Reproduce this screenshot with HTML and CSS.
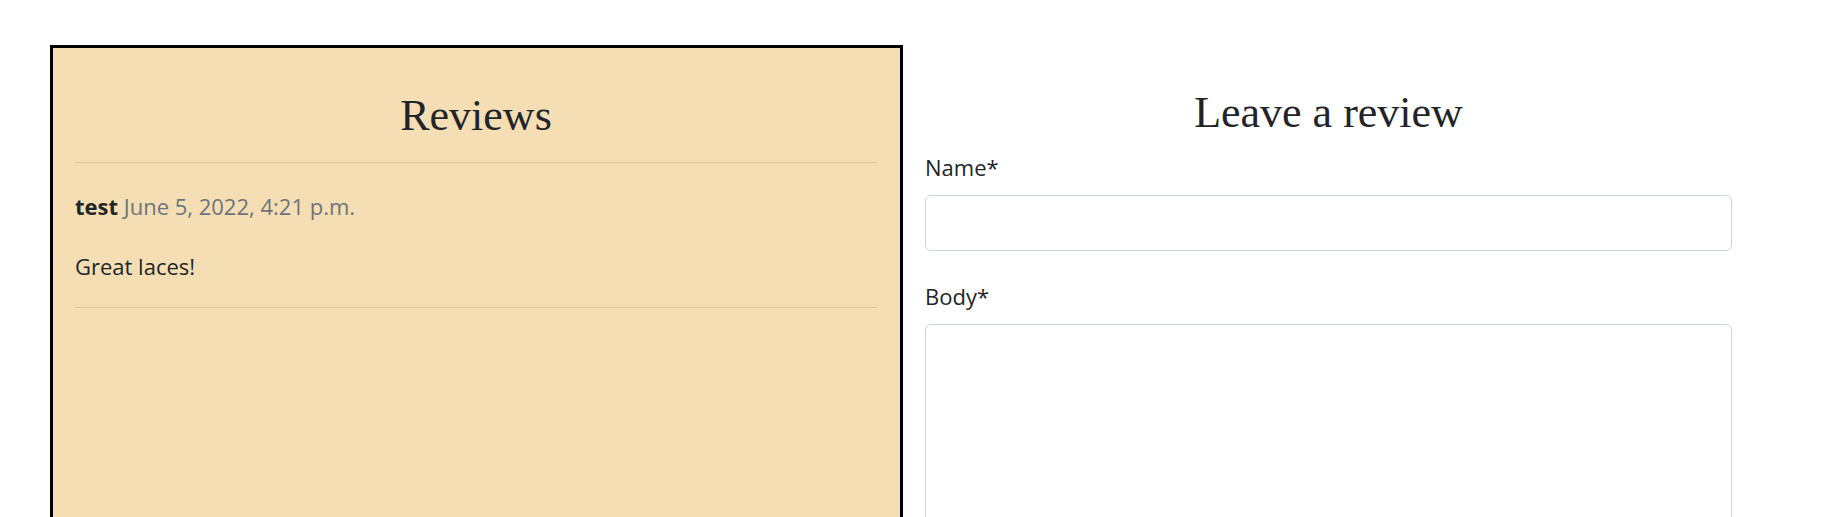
FILE: index.html
```html
<!DOCTYPE html>
<html lang="en">
<head>
<meta charset="utf-8">
<title>Reviews</title>
<link rel="stylesheet" href="styles.css">
</head>
<body>
<div class="page">
  <section class="reviews">
    <h2 class="title">Reviews</h2>
    <hr class="rule">
    <div class="review">
      <p class="meta"><strong class="author">test</strong> <span class="date">June 5, 2022, 4:21 p.m.</span></p>
      <p class="body">Great laces!</p>
    </div>
    <hr class="rule rule-end">
  </section>
  <section class="form-col">
    <h2 class="title form-title">Leave a review</h2>
    <form class="form">
      <div class="field">
        <label class="label" for="name">Name*</label>
        <input class="input" id="name" type="text">
      </div>
      <div class="field field-body">
        <label class="label" for="body">Body*</label>
        <textarea class="input textarea" id="body"></textarea>
      </div>
    </form>
  </section>
</div>
</body>
</html>
```

FILE: styles.css
```css
* { box-sizing: border-box; }
html, body { margin: 0; padding: 0; background: #fff; }
body {
  font-family: "Open Sans", "Noto Sans", sans-serif;
  font-size: 22px;
  line-height: 30px;
  color: #212529;
  overflow: hidden;
}
.page {
  display: flex;
  align-items: flex-start;
  gap: 22px;
  padding: 45px 0 0 50px;
}
.reviews {
  width: 853px;
  min-height: 700px;
  border: 3px solid #000;
  background: #f5deb3;
  padding: 22px 23px 22px 22px;
}
.title {
  font-family: "Liberation Serif", "Times New Roman", serif;
  font-weight: 400;
  font-size: 44px;
  line-height: 53px;
  text-align: center;
  margin: 19px 0 20px;
  color: #212529;
}
.rule {
  border: 0;
  border-top: 1px solid #dcc7a2;
  margin: 0;
}
.review { padding-top: 28px; }
.meta { margin: 0 0 30px; }
.author { font-weight: 700; }
.date { color: #6c757d; }
.body { margin: 0 0 26px; }
.form-col {
  width: 807px;
  padding-top: 41px;
}
.form-title { margin: 0 0 13px; }
.field { display: flex; flex-direction: column; }
.label { display: block; margin-bottom: 13px; }
.field-body { margin-top: 30px; }
.input {
  display: block;
  width: 100%;
  height: 56px;
  border: 1px solid #ced4da;
  border-radius: 6px;
  background: #fff;
  font: inherit;
  padding: 8px 14px;
}
.textarea { height: 300px; resize: none; }
```
